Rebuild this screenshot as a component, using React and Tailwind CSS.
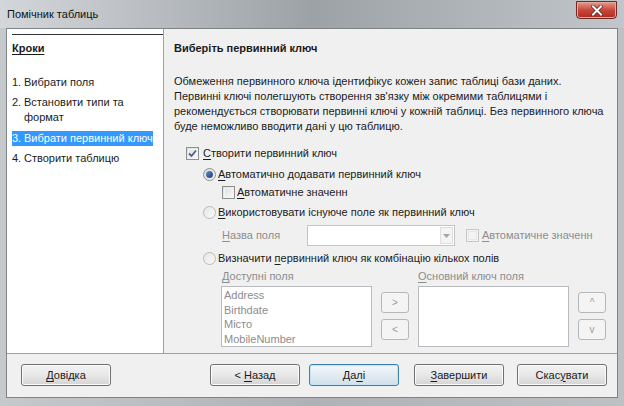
import React from "react";

const FONT = "font-['Liberation_Sans','Arial',sans-serif]";

function Mn({ children }) {
  return <span className="underline underline-offset-[2px] decoration-[1px]">{children}</span>;
}

function CheckBox({ checked = false, disabled = false }) {
  return (
    <span
      className={
        "relative inline-flex shrink-0 w-[13px] h-[13px] border " +
        (disabled ? "border-[#c6c6c6] bg-[#f4f4f4]" : "border-[#8e8f8f] bg-gradient-to-br from-[#dcdcdc] to-[#fbfbfb]")
      }
    >
      <span className={"absolute inset-[1px] border " + (disabled ? "border-[#e6e6e6]" : "border-[#f4f4f4]")} />
      {checked && (
        <svg viewBox="0 0 11 11" className="absolute inset-0 w-[11px] h-[11px]">
          <path d="M2 5.5 L4.5 8 L9 2.5" fill="none" stroke="#4a5f97" strokeWidth="1.8" />
        </svg>
      )}
    </span>
  );
}

function Radio({ selected = false, faint = false }) {
  return (
    <span
      className={
        "relative inline-flex shrink-0 w-[13px] h-[13px] rounded-full border " +
        (faint
          ? "border-[#b9b9b9] bg-gradient-to-br from-[#e6e6e6] to-[#fafafa]"
          : "border-[#8e8f8f] bg-gradient-to-br from-[#d9d9d9] to-[#fafafa]")
      }
    >
      {selected && (
        <span className="absolute left-[2px] top-[2px] w-[7px] h-[7px] rounded-full bg-gradient-to-br from-[#5e8ccf] to-[#1c3f7a]" />
      )}
    </span>
  );
}

function WinButton({ children, focused = false, className = "" }) {
  return (
    <div
      className={
        "flex items-center justify-center w-[90px] h-[22px] rounded-[3px] border text-[#1b1b1b] " +
        (focused
          ? "border-[#3c7fb1] bg-gradient-to-b from-[#f4f8fb] via-[#e2ebf2] to-[#d3e0ea] shadow-[inset_0_0_0_1px_#c4e5f6] "
          : "border-[#707070] bg-gradient-to-b from-[#f2f2f2] via-[#e8e8e8] to-[#d4d4d4] shadow-[inset_0_0_0_1px_#fcfcfc] ") +
        className
      }
    >
      <span>{children}</span>
    </div>
  );
}

function SmallButton({ children }) {
  return (
    <div className="flex items-center justify-center w-[28px] h-[21px] rounded-[3px] border border-[#b5b8bb] bg-[#f4f4f4] text-[10px] text-[#9a9a9a]">
      {children}
    </div>
  );
}

export default function App() {
  return (
    <div
      className={
        "w-[624px] h-[406px] flex flex-col px-[6px] pb-[8px] bg-gradient-to-r from-[#c6c9cc] via-[#aeb2b6] to-[#bec1c4] text-[11px] text-[#1b1b1b] " +
        FONT
      }
    >
      {/* Title bar */}
      <div className="h-[28px] -mx-[6px] px-[6px] flex items-start justify-between bg-gradient-to-r from-[#d4d7da] via-[#9da2a7] to-[#c2c6ca]">
        <div className="pl-[1px] pt-[7px] leading-[15px] text-[#111]">Помічник таблиць</div>
        <div className="relative mt-[1px] mr-[1px] w-[41px] h-[18px] rounded-b-[4px] border border-[#6b2a24] bg-gradient-to-b from-[#e49b8e] via-[#c9473a] to-[#b02a1d] flex items-center justify-center shadow-[inset_0_0_0_1px_#e8a99e]">
          <svg viewBox="0 0 12 11" className="w-[12px] h-[11px]">
            <path d="M2 1.5 L10 9.5 M10 1.5 L2 9.5" stroke="#5a2620" strokeWidth="3.6" strokeLinecap="square" />
            <path d="M2 1.5 L10 9.5 M10 1.5 L2 9.5" stroke="#ffffff" strokeWidth="2" strokeLinecap="square" />
          </svg>
        </div>
      </div>

      {/* Client area */}
      <div className="flex-1 flex flex-col border border-[#7f8489] bg-[#f0f0f0]">
        <div className="h-[324px] flex">
          {/* Steps */}
          <div className="w-[157px] shrink-0 bg-white border-r border-[#a0a0a0] pt-[5px] pl-[5px]">
            <div className="h-px bg-[#333]" />
            <div className="mt-[6px] leading-[15px] font-bold underline underline-offset-[2px]">Кроки</div>
            <div className="mt-[19px] flex flex-col leading-[15px]">
              <div className="flex">
                <span className="w-[12px]">1.</span>
                <span>Вибрати поля</span>
              </div>
              <div className="mt-[5px] flex">
                <span className="w-[12px]">2.</span>
                <span>
                  Встановити типи та
                  <br />
                  формат
                </span>
              </div>
              <div className="mt-[6px] flex">
                <span className="flex bg-[#3399ff] text-white whitespace-nowrap">
                  <span className="w-[12px]">3.</span>
                  <span>Вибрати первинний ключ</span>
                </span>
              </div>
              <div className="mt-[5px] flex">
                <span className="w-[12px]">4.</span>
                <span>Створити таблицю</span>
              </div>
            </div>
          </div>

          {/* Page content */}
          <div className="flex-1 pl-[10px] pt-[12px] leading-[15px]">
            <div className="font-bold">Виберіть первинний ключ</div>
            <p className="mt-[18px] whitespace-nowrap">
              Обмеження первинного ключа ідентифікує кожен запис таблиці бази даних.
              <br />
              Первинні ключі полегшують створення зв'язку між окремими таблицями і
              <br />
              рекомендується створювати первинні ключі у кожній таблиці. Без первинного ключа
              <br />
              буде неможливо вводити дані у цю таблицю.
            </p>

            <div className="mt-[12px] flex items-center gap-[4px] pl-[12px] h-[15px]">
              <CheckBox checked />
              <span>
                <Mn>С</Mn>творити первинний ключ
              </span>
            </div>

            <div className="mt-[6px] flex items-center gap-[2px] pl-[29px] h-[15px]">
              <Radio selected />
              <span>
                <Mn>А</Mn>втоматично додавати первинний ключ
              </span>
            </div>

            <div className="mt-[3px] flex items-center gap-[2px] pl-[48px] h-[15px]">
              <CheckBox />
              <span>
                <Mn>А</Mn>втоматичне значенн
              </span>
            </div>

            <div className="mt-[5px] flex items-center gap-[2px] pl-[29px] h-[15px]">
              <Radio faint />
              <span>
                <Mn>В</Mn>икористовувати існуюче поле як первинний ключ
              </span>
            </div>

            <div className="mt-[5px] flex items-center h-[21px] pl-[48px] text-[#8d8d8d]">
              <span className="w-[85px]">
                <Mn>Н</Mn>азва поля
              </span>
              <div className="w-[148px] h-[21px] flex justify-end items-stretch border border-[#c3c5c8] bg-white p-[1px]">
                <div className="w-[13px] flex items-center justify-center border border-[#dedede] bg-[#f4f4f4]">
                  <svg viewBox="0 0 7 4" className="w-[7px] h-[4px]">
                    <path d="M0 0 L7 0 L3.5 4 Z" fill="#a5a5a5" />
                  </svg>
                </div>
              </div>
              <div className="ml-[11px] flex items-center gap-[3px] whitespace-nowrap">
                <CheckBox disabled />
                <span>
                  <Mn>А</Mn>втоматичне значенн
                </span>
              </div>
            </div>

            <div className="mt-[5px] flex items-center gap-[2px] pl-[29px] h-[15px]">
              <Radio faint />
              <span>
                Визначити <Mn>п</Mn>ервинний ключ як комбінацію кількох полів
              </span>
            </div>

            <div className="mt-[3px] flex h-[15px] text-[#8d8d8d] pl-[48px]">
              <span className="w-[196px]">
                <Mn>Д</Mn>оступні поля
              </span>
              <span>
                <Mn>О</Mn>сновний ключ поля
              </span>
            </div>

            <div className="mt-[2px] flex pl-[47px]">
              <div className="w-[151px] h-[61px] border border-[#b8bcc0] bg-white px-[2px] pt-[1px] leading-[14.5px] text-[#8d8d8d]">
                <div>Address</div>
                <div>Birthdate</div>
                <div>Місто</div>
                <div>MobileNumber</div>
              </div>
              <div className="ml-[9px] pt-[6px] flex flex-col gap-[6px]">
                <SmallButton>&gt;</SmallButton>
                <SmallButton>&lt;</SmallButton>
              </div>
              <div className="ml-[9px] w-[151px] h-[61px] border border-[#b8bcc0] bg-white" />
              <div className="ml-[9px] pt-[6px] flex flex-col gap-[6px]">
                <SmallButton>^</SmallButton>
                <SmallButton>v</SmallButton>
              </div>
            </div>
          </div>
        </div>

        {/* Button row */}
        <div className="flex-1 border-t border-[#a0a0a0] flex items-start pt-[10px] pl-[14px] pr-[10px]">
          <WinButton>
            <Mn>Д</Mn>овідка
          </WinButton>
          <div className="flex-1" />
          <WinButton>
            &lt; <Mn>Н</Mn>азад
          </WinButton>
          <WinButton focused className="ml-[9px]">
            Да<Mn>л</Mn>і
          </WinButton>
          <WinButton className="ml-[15px]">
            <Mn>З</Mn>авершити
          </WinButton>
          <WinButton className="ml-[13px]">
            Скас<Mn>у</Mn>вати
          </WinButton>
        </div>
      </div>
    </div>
  );
}
